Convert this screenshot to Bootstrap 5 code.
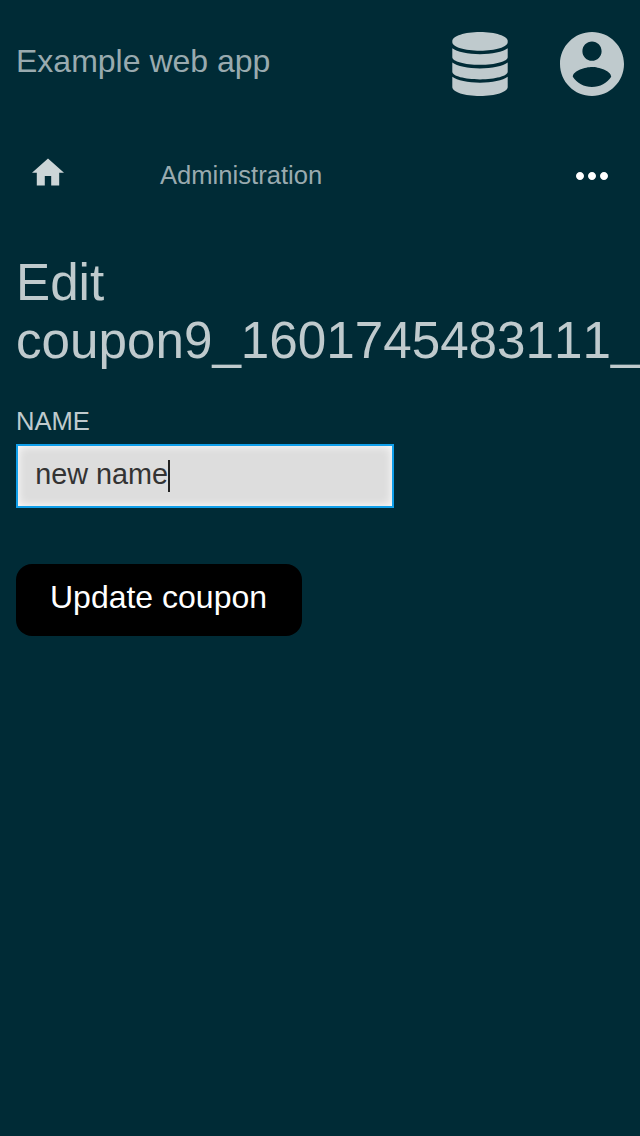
<!DOCTYPE html>
<html lang="en">
<head>
<meta charset="utf-8">
<meta name="viewport" content="width=device-width, initial-scale=1">
<title>Example web app</title>
<link rel="stylesheet" href="https://cdn.jsdelivr.net/npm/bootstrap@5.3.0/dist/css/bootstrap.min.css">
<style>
  body { background: #002b36; color: #bfcacd; font-family: "Liberation Sans", Arial, sans-serif; }
  svg { display: block; fill: currentColor; }
  .topbar { height: 128px; }
  .brand-link { font-size: 32px; line-height: 36px; color: #99aaaf; margin-top: -6px; }
  .top-icons { gap: 52px; color: #bfcacd; }
  .crumbs { height: 96px; padding: 0 32px; }
  .home-link { color: #ccd5d7; width: 128px; margin-top: -8px; }
  .crumb-link { font-size: 25.6px; line-height: 30px; color: #99aaaf; margin-top: -2px; }
  .page-title { font-size: 51.2px; line-height: 58px; font-weight: 400; font-kerning: none; margin: 30px 0 0; color: #bfcacd; }
  .field-label { font-size: 25.6px; line-height: 30px; margin: 36px 0 0; color: #bfcacd; }
  .name-field { width: 378px; height: 64px; margin-top: 8px; padding: 0 0 0 17.2px; border: 2px solid #109fea; border-radius: 0;
    background: #ddd; color: #333; font-size: 28.8px; line-height: 32px; box-shadow: inset 0 0 10px #fff; }
  .field-value { margin-top: -4px; }
  .caret { width: 2px; height: 32px; background: #222; }
  .update-btn { width: 286px; height: 72px; margin-top: 56px; padding: 0 1px 6px 0; border: 0; border-radius: 16px;
    background: #000; color: #fff; font-size: 32px; line-height: 36px; }
</style>
</head>
<body class="vh-100 overflow-hidden">
<header class="topbar d-flex align-items-center justify-content-between px-3">
  <a class="brand-link text-decoration-none" href="#">Example web app</a>
  <div class="top-icons d-flex align-items-center">
    <svg width="56" height="64" viewBox="0 0 56 64" aria-label="Data"><path d="M.3 9C.3 4 12.7 0 28 0s27.7 4 27.7 9v1.2c0 4.7-12.4 8.5-27.7 8.5S.3 14.900.3 10.200z"/><path d="M.3 16.300C5 20 16 22.200 28 22.200s23-2.200 27.700-5.900v8.900c0 4.200-12.400 7.600-27.700 7.600S.3 29.400.3 25.200z"/><path d="M.3 30.600C5 34.300 16 36.500 28 36.500s23-2.200 27.700-5.900v9.200c0 4.200-12.400 7.600-27.700 7.600S.3 44 .3 39.800z"/><path d="M.3 44.800C5 48.500 16 50.700 28 50.700s23-2.200 27.700-5.900v10.200c0 5-12.400 9-27.700 9S.3 60 .3 55z"/></svg>
    <svg width="64" height="64" viewBox="2 2 20 20" aria-label="Account"><path d="M12 2C6.48 2 2 6.48 2 12s4.48 10 10 10 10-4.48 10-10S17.52 2 12 2zm0 3c1.66 0 3 1.34 3 3s-1.34 3-3 3-3-1.34-3-3 1.34-3 3-3zm0 14.2c-2.5 0-4.71-1.28-6-3.22.03-1.99 4-3.08 6-3.08 1.99 0 5.97 1.09 6 3.08-1.29 1.94-3.5 3.22-6 3.22z"/></svg>
  </div>
</header>
<nav class="crumbs d-flex align-items-center">
  <a class="home-link" href="#" aria-label="Home"><svg width="32" height="28" viewBox="2 2.75 20 17.5"><path d="M10 20v-6h4v6h5v-8h3L12 3 2 12h3v8z"/></svg></a>
  <a class="crumb-link text-decoration-none" href="#">Administration</a>
  <a class="ms-auto text-white" href="#" aria-label="More"><svg width="32" height="8" viewBox="4 10 16 4"><path d="M6 10c-1.1 0-2 .9-2 2s.9 2 2 2 2-.9 2-2-.9-2-2-2zm12 0c-1.1 0-2 .9-2 2s.9 2 2 2 2-.9 2-2-.9-2-2-2zm-6 0c-1.1 0-2 .9-2 2s.9 2 2 2 2-.9 2-2-.9-2-2-2z"/></svg></a>
</nav>
<main class="px-3">
  <h1 class="page-title">Edit coupon9_1601745483111_</h1>
  <div class="field-label" id="name-label">NAME</div>
  <div class="name-field form-control d-flex align-items-center" role="textbox" aria-labelledby="name-label"><span class="field-value">new name</span><span class="caret"></span></div>
  <button type="button" class="update-btn btn">Update coupon</button>
</main>
<script src="https://cdn.jsdelivr.net/npm/bootstrap@5.3.0/dist/js/bootstrap.bundle.min.js"></script>
</body>
</html>
